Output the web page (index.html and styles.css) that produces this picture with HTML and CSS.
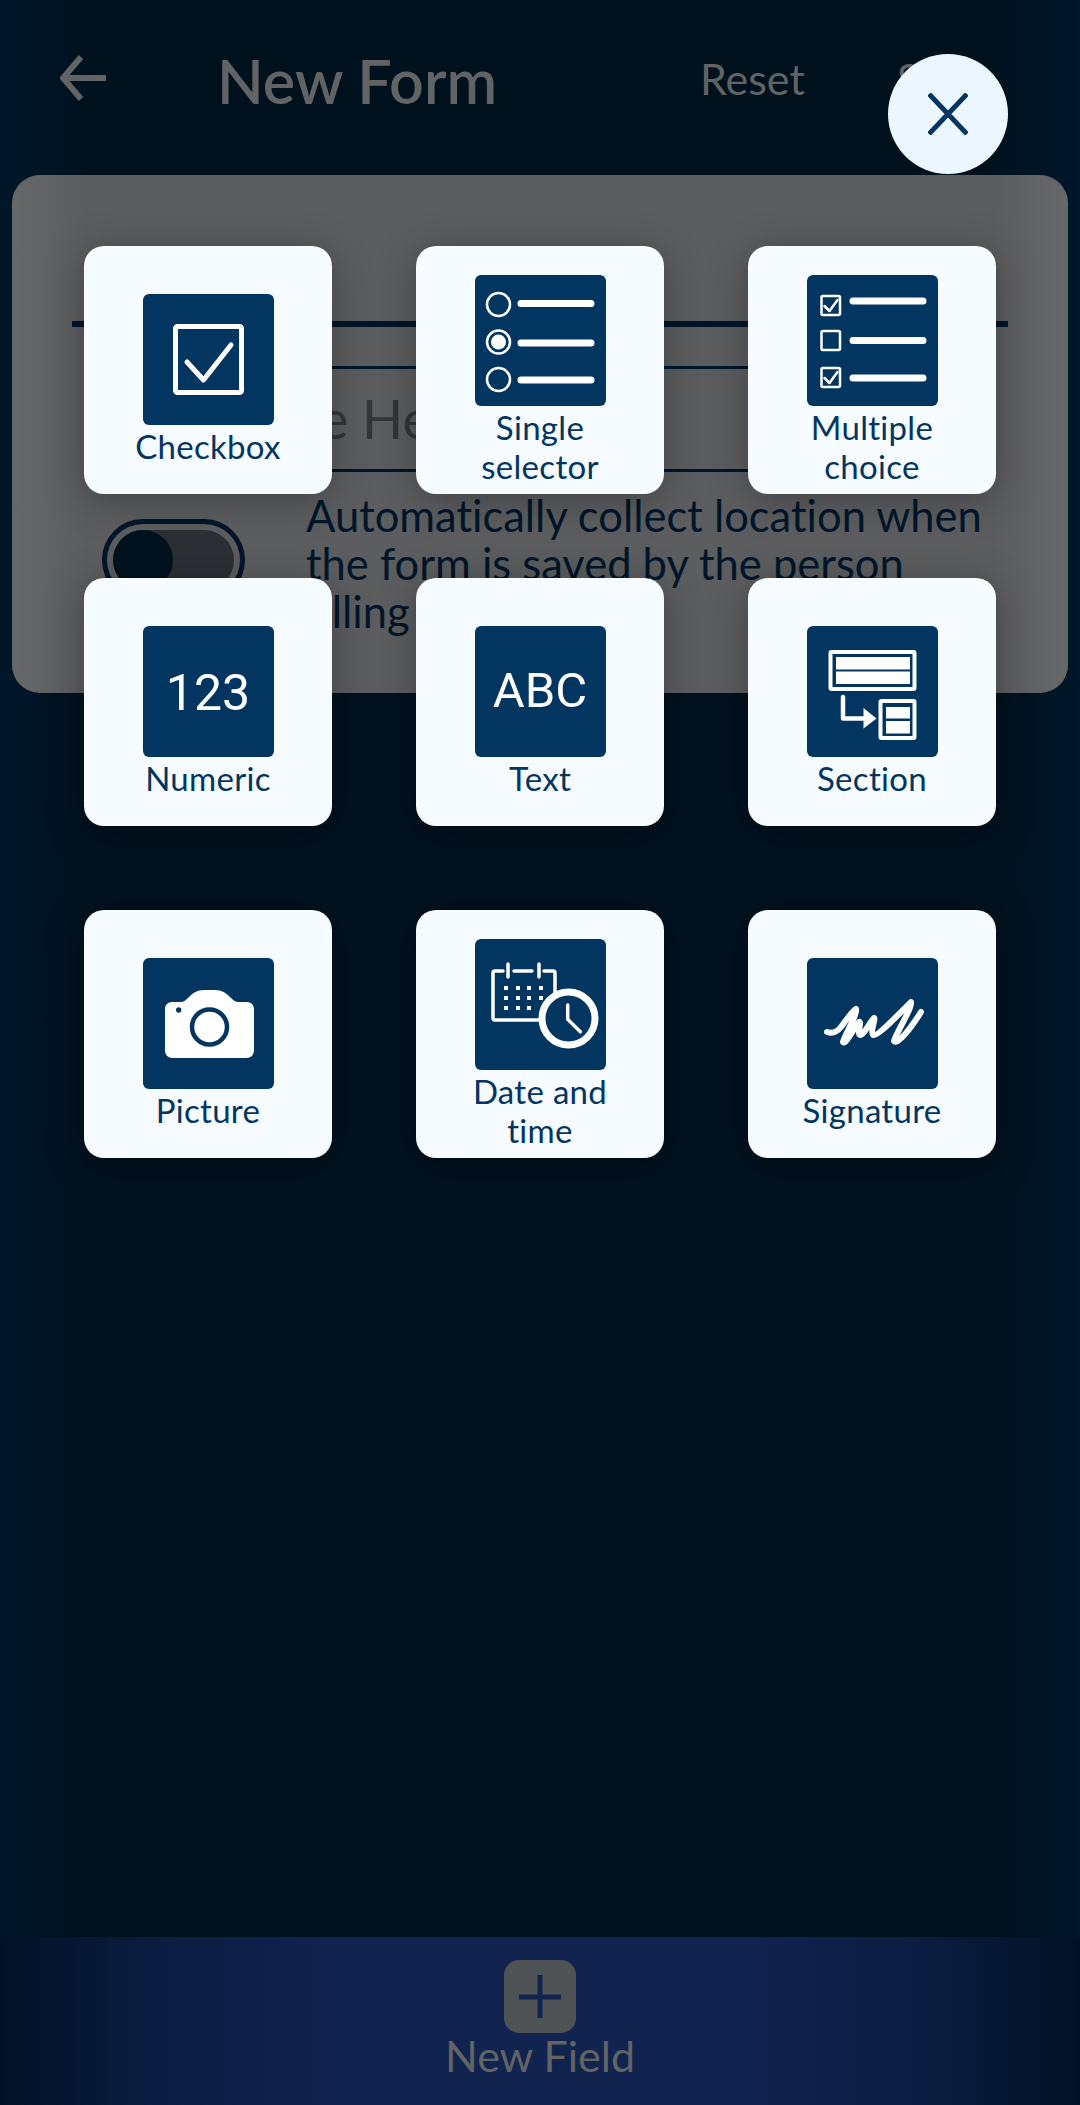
FILE: index.html
```html
<!DOCTYPE html>
<html lang="en">
  <head>
    <meta charset="UTF-8" />
    <title>New Form</title>
    <link rel="stylesheet" href="styles.css">
  </head>
  <body>
    <div class="screen">
      <header class="topbar">
        <svg class="back" viewBox="0 0 48 48"><path d="M46 24H4M21 3L3 24l18 21" /></svg>
        <h1 class="title">New Form</h1>
        <span class="action reset">Reset</span>
        <span class="action">Save</span>
      </header>

      <section class="panel">
        <div class="rule"></div>
        <div class="name-input">Title Here</div>
        <div class="location-row">
          <div class="toggle"><div class="track"><div class="knob"></div></div></div>
          <p class="location-text">Automatically collect location when the form is saved by the person filling it</p>
        </div>
      </section>

      <footer class="bottombar">
        <div class="add-button">
          <svg viewBox="0 0 72 73"><path d="M36 15v43M15 37h42" /></svg>
        </div>
        <span class="add-label">New Field</span>
      </footer>

      <!-- field picker, sits on top of the dimmed form -->
      <div class="picker">
        <button class="close">
          <svg viewBox="0 0 40 42"><path d="M1 1l38 40M39 1L1 41" /></svg>
        </button>
        <div class="field-grid">
          <div class="field-card">
            <div class="tile">
              <svg viewBox="0 0 131 131">
                <rect class="line" x="32.5" y="32.5" width="66" height="66" rx="2" stroke-width="5" />
                <path class="line" d="M44 68l16.5 18L88 51" stroke-width="5" />
              </svg>
            </div>
            <span class="field-label">Checkbox</span>
          </div>

          <div class="field-card">
            <div class="tile">
              <svg viewBox="0 0 131 131">
                <circle class="line" cx="23.5" cy="29.5" r="11.5" stroke-width="2.5" />
                <circle class="line" cx="23.5" cy="67" r="11.5" stroke-width="2.5" />
                <circle class="fill" cx="23.5" cy="67" r="7.5" />
                <circle class="line" cx="23.5" cy="104.5" r="11.5" stroke-width="2.5" />
                <path class="line" d="M46 28.5h70M46 68h70M46 105h70" stroke-width="7" />
              </svg>
            </div>
            <span class="field-label">Single selector</span>
          </div>

          <div class="field-card">
            <div class="tile">
              <svg viewBox="0 0 131 131">
                <rect class="line" x="14.5" y="21" width="18.5" height="19" rx="1.5" stroke-width="2.5" />
                <rect class="line" x="14.5" y="56" width="18.5" height="19" rx="1.5" stroke-width="2.5" />
                <rect class="line" x="14.5" y="93" width="18.5" height="19" rx="1.5" stroke-width="2.5" />
                <path class="line" d="M17.5 31l5 5 8-11M17.5 103l5 5 8-11" stroke-width="2.5" />
                <path class="line" d="M46 26h70M46 65.5h70M46 103h70" stroke-width="7" />
              </svg>
            </div>
            <span class="field-label">Multiple choice</span>
          </div>

          <div class="field-card">
            <div class="tile tile-text tile-digits">123</div>
            <span class="field-label">Numeric</span>
          </div>

          <div class="field-card">
            <div class="tile tile-text tile-letters">ABC</div>
            <span class="field-label">Text</span>
          </div>

          <div class="field-card">
            <div class="tile">
              <svg viewBox="0 0 131 131">
                <rect class="line" x="23.5" y="26" width="84" height="37" rx="1" stroke-width="4" />
                <rect class="fill" x="29" y="31" width="74" height="12.5" />
                <rect class="fill" x="29" y="45.5" width="74" height="12.5" />
                <rect class="line" x="73.5" y="75" width="34" height="37" rx="1" stroke-width="4" />
                <rect class="fill" x="79" y="81" width="24" height="11.5" />
                <rect class="fill" x="79" y="95" width="24" height="12.5" />
                <path class="line" d="M36 71v21.5h21" stroke-width="4.5" />
                <path class="fill" d="M56.5 82l13 10.5-13 10z" />
              </svg>
            </div>
            <span class="field-label">Section</span>
          </div>

          <div class="field-card">
            <div class="tile">
              <svg viewBox="0 0 131 131">
                <path class="fill" d="M29 44h8c4 0 6-2 9-5 4-4 8-7 15-7h11c7 0 11 3 15 7 3 3 5 5 9 5h8c4 0 7 3 7 7v41c0 5-3 8-8 8H30c-5 0-8-3-8-8V51c0-4 3-7 7-7z" />
                <circle class="cut" cx="66.5" cy="69" r="17.5" stroke-width="4.5" />
                <circle class="dot" cx="35.7" cy="52" r="2.7" />
              </svg>
            </div>
            <span class="field-label">Picture</span>
          </div>

          <div class="field-card">
            <div class="tile">
              <svg viewBox="0 0 131 131">
                <path class="line" d="M28 32h-8a2 2 0 0 0-2 2v45a2 2 0 0 0 2 2h44M39 32h18M69 32h9a2 2 0 0 1 2 2v20M33 25v13M64 25v13" stroke-width="3.5" />
                <path class="fill" d="M29 47h4v4h-4zM41 47h4v4h-4zM52 47h4v4h-4zM64 47h4v4h-4zM29 57h4v4h-4zM41 57h4v4h-4zM52 57h4v4h-4zM64 57h4v4h-4zM29 67h4v4h-4zM41 67h4v4h-4zM52 67h4v4h-4z" />
                <circle class="ring" cx="93.5" cy="79.5" r="26.5" stroke-width="7" />
                <path class="line" d="M92.7 66v14.3l12.6 12.4" stroke-width="3.5" />
              </svg>
            </div>
            <span class="field-label">Date and time</span>
          </div>

          <div class="field-card">
            <div class="tile">
              <svg viewBox="0 0 131 131">
                <path class="line" d="M20 74C26 76 30 74 34 69C39 63 44 54 49 51C51 56 37 78 36 84C38 88 48 68 52 64C55 62 50 76 53 77C57 77 63 64 67 60C69 60 63 74 66 77C70 79 88 60 104 44C107 46 88 78 87 83C90 88 104 70 114 54" stroke-width="6" />
              </svg>
            </div>
            <span class="field-label">Signature</span>
          </div>
        </div>
      </div>
    </div>
  </body>
</html>
```

FILE: styles.css
```css
* {
  box-sizing: border-box;
}

body {
  margin: 0;
  font-family: Lato, "Noto Sans", sans-serif;
  font-variant-ligatures: none;
  background: #00111f;
}

.screen {
  position: relative;
  width: 1080px;
  height: 2105px;
  overflow: hidden;
  display: flex;
  flex-direction: column;
  background: linear-gradient(90deg, #01172a, #00111e 8%, #00111e 92%, #01172a);
}

.topbar {
  height: 175px;
  display: flex;
  align-items: flex-start;
  padding-left: 60px;
  color: #616365;
}

.back {
  width: 48px;
  height: 48px;
  margin-top: 54px;
  fill: none;
  stroke: #616365;
  stroke-width: 6;
}

.title {
  margin: 45px 0 0 109px;
  width: 483px;
  font-size: 61px;
  line-height: 72px;
  font-weight: 600;
}

.action {
  margin-top: 55px;
  font-size: 43px;
  line-height: 48px;
}

.reset {
  width: 197px;
}

.panel {
  position: relative;
  height: 518px;
  margin: 0 12px;
  padding: 146px 60px 0;
  border-radius: 28px;
  background: linear-gradient(90deg, #666769, #5c5d5f 7%, #5c5d5f 93%, #666769);
  color: #00162a;
}

.rule {
  height: 6px;
  background: #00162a;
}

.name-input {
  margin: 39px 100px 0 171px;
  height: 106px;
  border-top: 3px solid #00162a;
  border-bottom: 3px solid #00162a;
  font-size: 54px;
  line-height: 100px;
  color: #333537;
}

.location-row {
  display: flex;
  margin: 19px -40px 0 30px;
}

.toggle {
  flex: none;
  width: 143px;
  height: 82px;
  margin-top: 28px;
  padding: 6px;
  border: 5px solid #00162a;
  border-radius: 41px;
}

.track {
  height: 60px;
  border-radius: 30px;
  background: #2c3034;
}

.knob {
  width: 60px;
  height: 60px;
  border-radius: 50%;
  background: #00121f;
}

.location-text {
  margin: 0 0 0 61px;
  width: 690px;
  font-size: 43.5px;
  line-height: 48px;
}

.bottombar {
  margin-top: auto;
  height: 168px;
  padding-top: 23px;
  display: flex;
  flex-direction: column;
  align-items: center;
  background: linear-gradient(90deg, #021226, #0b1c40 14%, #11234f 32%, #11234f 68%, #0b1c40 86%, #021226);
}

.add-button {
  width: 72px;
  height: 73px;
  border-radius: 15px;
  background: #505356;
}

.add-button svg {
  display: block;
  fill: none;
  stroke: #11234f;
  stroke-width: 5;
}

.add-label {
  margin-top: -1px;
  font-size: 43px;
  line-height: 48px;
  color: #616365;
}

.picker {
  position: absolute;
  inset: 0;
  padding: 54px 84px 0;
}

.close {
  display: flex;
  align-items: center;
  justify-content: center;
  width: 120px;
  height: 120px;
  margin-left: 804px;
  padding: 0;
  border: none;
  border-radius: 50%;
  background: #ebf6fe;
}

.close svg {
  width: 40px;
  height: 42px;
  fill: none;
  stroke: #033560;
  stroke-width: 5;
}

.field-grid {
  display: grid;
  grid-template-columns: repeat(3, 248px);
  grid-auto-rows: 248px;
  gap: 84px;
  margin-top: 72px;
}

.field-card {
  display: flex;
  flex-direction: column;
  align-items: center;
  justify-content: center;
  padding-top: 20px;
  border-radius: 20px;
  background: #f5fbff;
  box-shadow: 0 6px 40px rgba(0, 0, 0, 0.3);
}

.tile {
  flex: none;
  width: 131px;
  height: 131px;
  border-radius: 6px;
  background: #023560;
}

.tile svg {
  display: block;
  width: 131px;
  height: 131px;
}

.tile-text {
  display: flex;
  align-items: center;
  justify-content: center;
  font-family: Roboto, sans-serif;
  color: #fff;
}

.tile-digits {
  font-size: 50px;
  padding-top: 3px;
}

.tile-letters {
  font-size: 49px;
  padding-bottom: 3px;
}

.field-label {
  width: 170px;
  margin-top: 2px;
  font-size: 33px;
  line-height: 39px;
  letter-spacing: 0.3px;
  text-align: center;
  color: #03355f;
}

.line {
  fill: none;
  stroke: #fff;
  stroke-linecap: round;
  stroke-linejoin: round;
}

.fill {
  fill: #fff;
}

.ring {
  fill: none;
  stroke: #fff;
}

.cut {
  fill: none;
  stroke: #023560;
}

.dot {
  fill: #023560;
}
```
